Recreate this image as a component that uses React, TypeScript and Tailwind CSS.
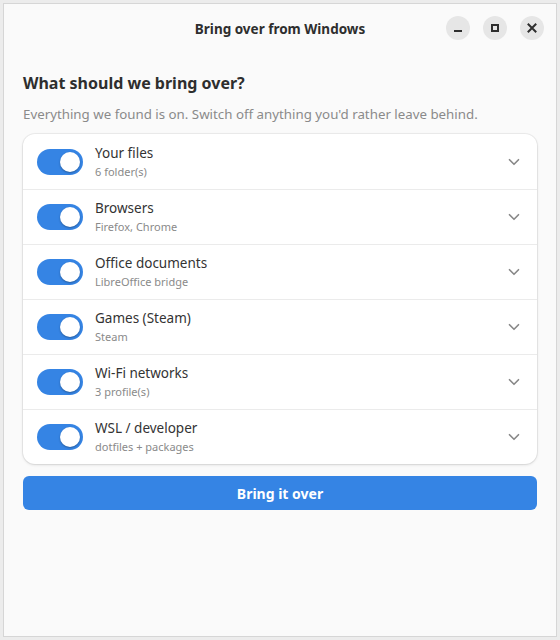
import { ChevronDown } from 'lucide-react';

interface Item {
    title: string;
    detail: string;
}

const items: Item[] = [
    { title: 'Your files', detail: '6 folder(s)' },
    { title: 'Browsers', detail: 'Firefox, Chrome' },
    { title: 'Office documents', detail: 'LibreOffice bridge' },
    { title: 'Games (Steam)', detail: 'Steam' },
    { title: 'Wi-Fi networks', detail: '3 profile(s)' },
    { title: 'WSL / developer', detail: 'dotfiles + packages' },
];

function Toggle() {
    return (
        <div className="w-[46px] h-[26px] rounded-full bg-[#3584e4] flex items-center justify-end px-[3px] shrink-0">
            <div className="w-[20px] h-[20px] rounded-full bg-white shadow-[0_1px_2px_rgba(0,0,0,0.3)]" />
        </div>
    );
}

export default function App() {
    return (
        <div className="w-[560px] h-[640px] bg-[#ececec] p-[3px]" style={{ fontFamily: '"Noto Sans", sans-serif' }}>
            <div className="h-full border border-[#d6d6d6] bg-[#fafafa] flex flex-col">
                {/* header bar */}
                <div className="h-[48px] relative flex items-center justify-center shrink-0">
                    <span className="text-[13.5px] font-bold text-[#2e2e2e] mt-[2px]">Bring over from Windows</span>
                    <div className="absolute right-[12px] top-[12px] flex gap-[13px]">
                        <button className="w-[24px] h-[24px] rounded-full bg-[#e6e6e6] flex items-center justify-center">
                            <span className="block w-[8px] h-[2px] bg-[#2e2e2e] mt-[6px]" />
                        </button>
                        <button className="w-[24px] h-[24px] rounded-full bg-[#e6e6e6] flex items-center justify-center">
                            <span className="block w-[8px] h-[8px] border-2 border-[#2e2e2e]" />
                        </button>
                        <button className="w-[24px] h-[24px] rounded-full bg-[#e6e6e6] flex items-center justify-center">
                            <svg width="10" height="10" viewBox="0 0 10 10">
                                <path d="M1.5 1.5 L8.5 8.5 M8.5 1.5 L1.5 8.5" stroke="#2e2e2e" strokeWidth="2" strokeLinecap="square" />
                            </svg>
                        </button>
                    </div>
                </div>

                <div className="px-[19px] pt-[19px]">
                    <h1 className="text-[16px] font-bold text-[#2e2e2e] leading-[24px]">What should we bring over?</h1>
                    <p className="text-[13.3px] text-[#8a8a8a] mt-[9px] leading-[20px]">
                        Everything we found is on. Switch off anything you'd rather leave behind.
                    </p>

                    <div className="mt-[10px] bg-white rounded-[12px] shadow-[0_0_0_1px_rgba(0,0,0,0.05),0_1px_3px_rgba(0,0,0,0.12)]">
                        {items.map((item, i) => (
                            <div
                                key={item.title}
                                className={`h-[55px] flex items-center pl-[14px] pr-[14px] ${i > 0 ? 'border-t border-[#ebebeb]' : ''}`}
                            >
                                <Toggle />
                                <div className="ml-[12px] flex-1">
                                    <div className="text-[13.5px] text-[#333] leading-[18px]">{item.title}</div>
                                    <div className="text-[11px] text-[#8a8a8a] leading-[16px] mt-[2px]">{item.detail}</div>
                                </div>
                                <ChevronDown size={18} strokeWidth={2.2} className="text-[#888]" />
                            </div>
                        ))}
                    </div>

                    <button className="mt-[12px] w-full h-[34px] rounded-[6px] bg-[#3584e4] text-white text-[14px] font-bold">
                        Bring it over
                    </button>
                </div>
            </div>
        </div>
    );
}
